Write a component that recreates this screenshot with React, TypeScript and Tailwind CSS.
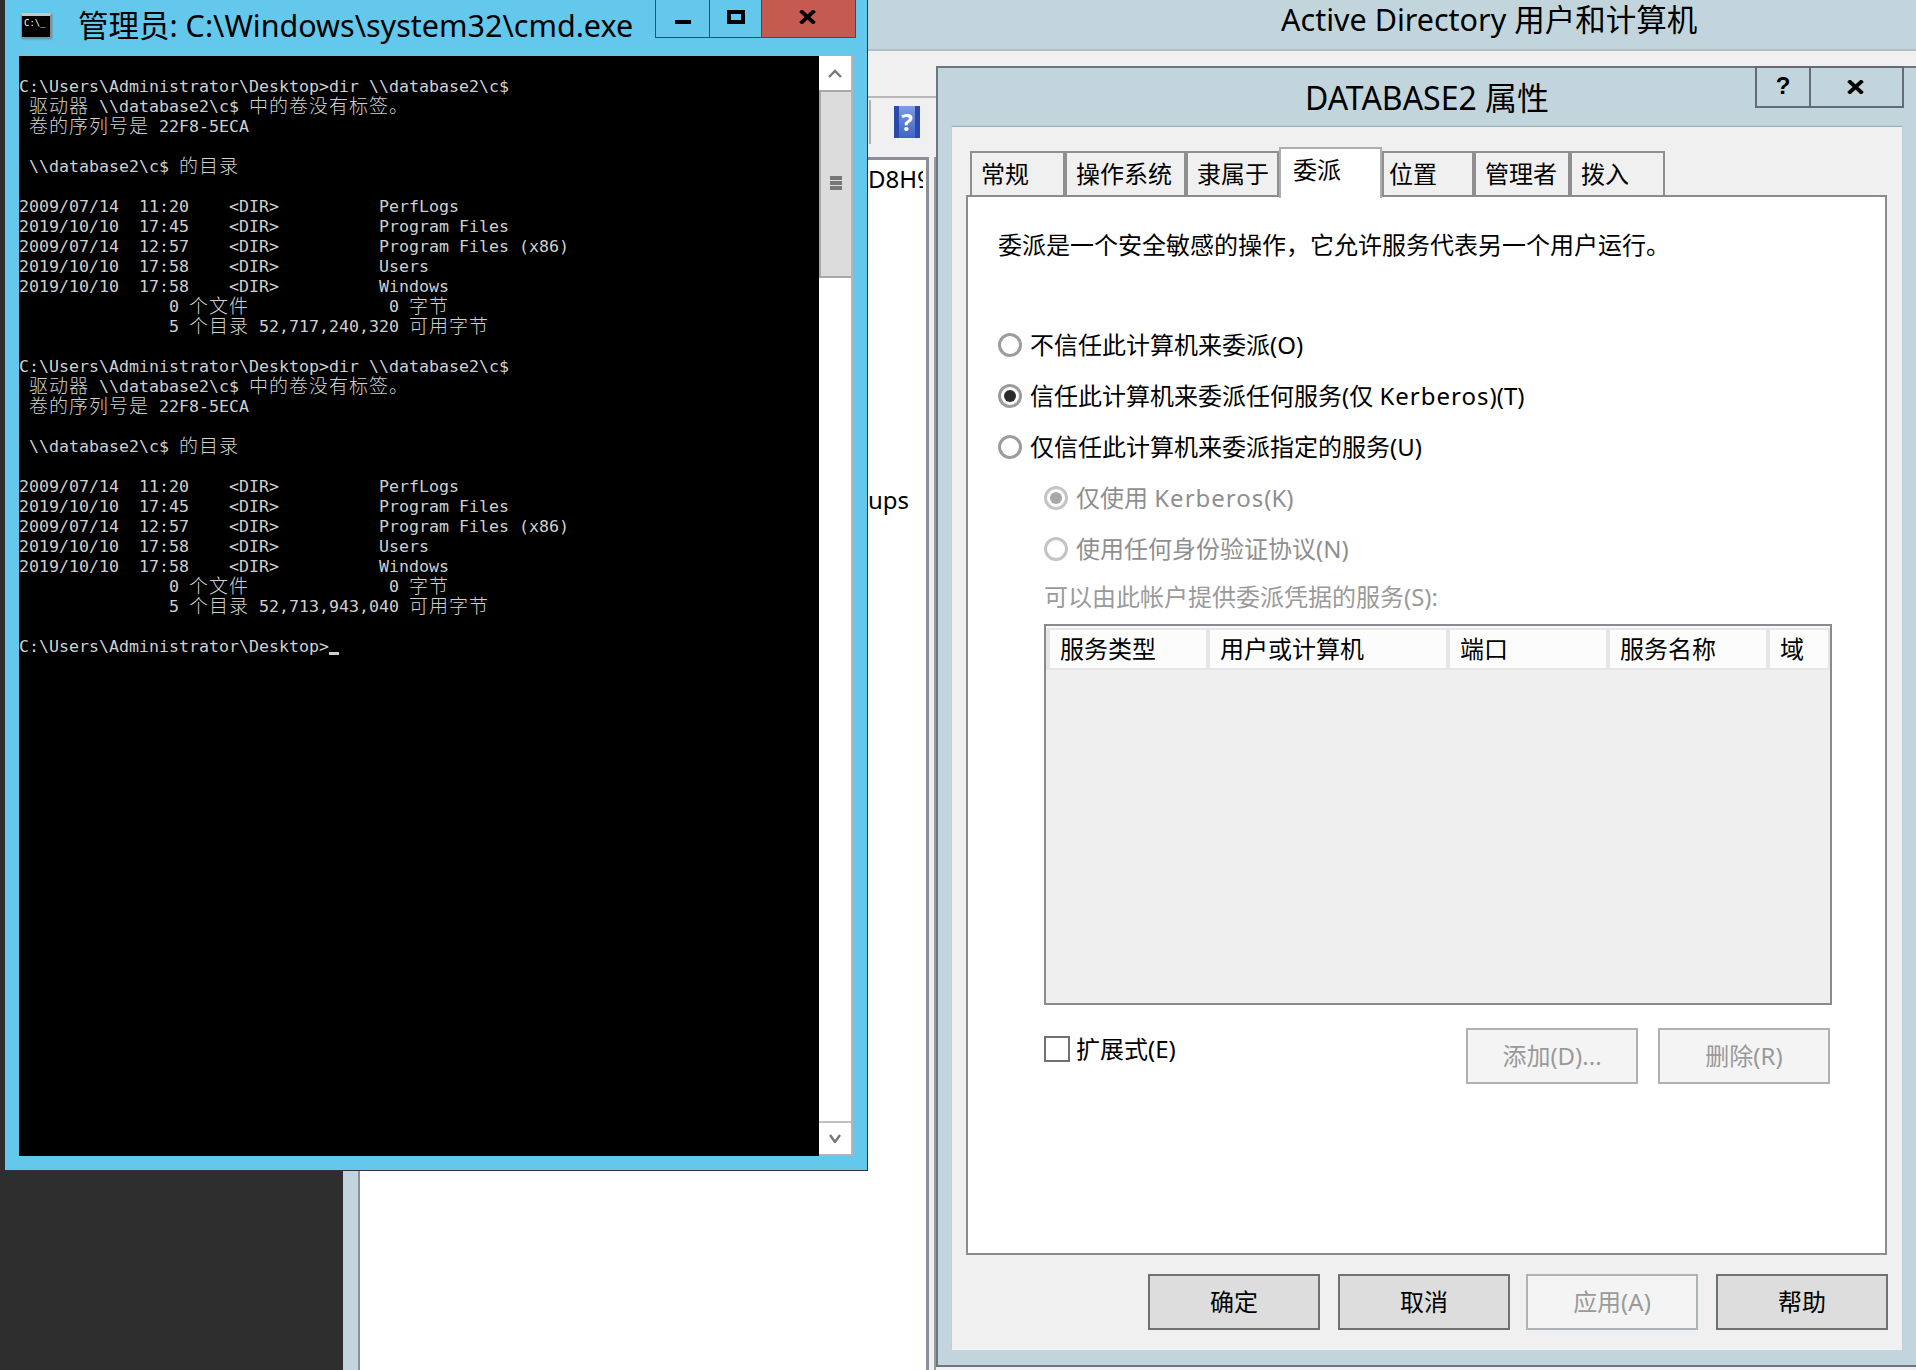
import type { ReactNode } from "react";

const dirs1 = [
  "2009/07/14  11:20    <DIR>          PerfLogs",
  "2019/10/10  17:45    <DIR>          Program Files",
  "2009/07/14  12:57    <DIR>          Program Files (x86)",
  "2019/10/10  17:58    <DIR>          Users",
  "2019/10/10  17:58    <DIR>          Windows",
];

const block = (free: string) => [
  "C:\\Users\\Administrator\\Desktop>dir \\\\database2\\c$",
  " 驱动器 \\\\database2\\c$ 中的卷没有标签。",
  " 卷的序列号是 22F8-5ECA",
  "",
  " \\\\database2\\c$ 的目录",
  "",
  ...dirs1,
  "               0 个文件              0 字节",
  `               5 个目录 ${free} 可用字节`,
  "",
];

const consoleLines = ["", ...block("52,717,240,320"), ...block("52,713,943,040")];

function ConsoleLine({ text }: { text: string }) {
  const parts = text.split(/([\u3000-\u9fff\uff00-\uffef]+)/);
  return (
    <div className="h-5 leading-5 whitespace-pre">
      {parts.map((p, i) =>
        i % 2 === 1 ? (
          <span key={i} className="font-['Noto_Sans_CJK_SC',sans-serif] text-[19px] leading-[0] tracking-[1px] font-light align-[-1px]">
            {p}
          </span>
        ) : (
          <span key={i}>{p}</span>
        )
      )}
    </div>
  );
}

function CmdWindow() {
  return (
    <div className="absolute left-[5px] top-0 w-[863px] h-[1171px] bg-[#64c8ec] border-r border-b border-[#2e3338] z-20">
      <div className="flex h-[56px] items-start">
        <div className="ml-[16px] mt-[13px] w-[30px] h-[25px] bg-black border border-[#8a8a8a] border-t-[3px] border-t-[#c8c8c8] shadow-[1px_1px_2px_#5a8aa0] overflow-hidden">
          <div className="font-['DejaVu_Sans_Mono',monospace] text-[9px] leading-[14px] pl-[2px] text-white whitespace-pre">C:\_</div>
        </div>
        <div className="ml-[27px] mt-[2px] w-[577px] font-['Noto_Sans','Noto_Sans_CJK_SC',sans-serif] text-[30.5px] leading-[46px] text-black whitespace-nowrap">
          管理员: C:\Windows\system32\cmd.exe
        </div>
        <div className="flex h-[38px] border-l border-b border-r border-[#3f4a52]">
          <div className="w-[54px] flex justify-center border-r border-[#3f4a52]">
            <div className="mt-[20px] w-4 h-1 bg-black" />
          </div>
          <div className="w-[52px] flex justify-center border-r border-[#3f4a52]">
            <div className="mt-[10px] w-[18px] h-[14px] border-[4px] border-black" />
          </div>
          <div className="w-[93px] flex justify-center bg-[#c45a50]">
            <svg width="17" height="14" viewBox="0 0 17 14" className="mt-[10px] -ml-[3px]">
              <path d="M1.5 0.5L15.5 13.5M15.5 0.5L1.5 13.5" stroke="#000" strokeWidth="3.8" />
            </svg>
          </div>
        </div>
      </div>
      <div className="flex ml-[14px] w-[834px] h-[1100px] shadow-[0_-1px_1px_#9fb4bd]">
        <div className="w-[800px] pt-[1px] bg-black text-[#d0d0d0] font-['DejaVu_Sans_Mono',monospace] text-[16.61px] relative overflow-hidden">
          {consoleLines.map((l, i) => (
            <ConsoleLine key={i} text={l} />
          ))}
          <div className="h-5 leading-5 whitespace-pre">
            C:\Users\Administrator\Desktop&gt;<span className="inline-block w-[10px] h-[3px] bg-[#d0d0d0] align-[-3px]" />
          </div>
        </div>
        <div className="w-[34px] flex flex-col bg-white border-r-2 border-b-2 border-[#b5b5b5]">
          <div className="h-[34px] flex justify-center items-center">
            <svg width="14" height="9" viewBox="0 0 14 9">
              <path d="M1 8L7 2L13 8" fill="none" stroke="#777" strokeWidth="2.4" />
            </svg>
          </div>
          <div className="h-[188px] bg-[#dcdcdc] border-l-2 border-t-2 border-b-2 border-[#a8a8a8] flex flex-col items-center justify-center gap-[1px] pb-[2px]">
            <div className="w-3 h-1 bg-[#777]" />
            <div className="w-3 h-1 bg-[#777]" />
            <div className="w-3 h-1 bg-[#777]" />
          </div>
          <div className="flex-1" />
          <div className="h-[33px] border-t-2 border-[#c0c0c0] flex justify-center items-center">
            <svg width="14" height="9" viewBox="0 0 14 9">
              <path d="M2 1L7 8L12 1" fill="none" stroke="#777" strokeWidth="2.4" />
            </svg>
          </div>
        </div>
      </div>
    </div>
  );
}

function AdWindow() {
  return (
    <div className="absolute left-[343px] top-0 right-0 bottom-0 flex flex-col bg-[#c3d5dc] font-['Noto_Sans','Noto_Sans_CJK_SC',sans-serif]">
      <div className="h-[51px] shrink-0 border-b-2 border-[#b3bdc2] pl-[938px] text-[30.5px] leading-[38px] text-black whitespace-nowrap">
        Active Directory 用户和计算机
      </div>
      <div className="flex-1 ml-[15px] flex flex-col border-l-2 border-[#8a8e96] bg-[#f0f0f0]">
        <div className="h-[47px] shrink-0 border-b-2 border-[#b8b8b8]" />
        <div className="h-[59px] shrink-0 flex pl-[509px]">
          <div className="mt-[2px] w-[2px] h-[44px] bg-[#b0b0b0]" />
          <div className="ml-[23px] mt-[8px] h-[32px] w-[26px] bg-[#2b4aa8] flex justify-center">
            <div className="w-[16px] bg-gradient-to-b from-[#7d9be0] to-[#3f63c4] text-white text-[24px] leading-[32px] font-bold text-center">?</div>
          </div>
        </div>
        <div className="flex-1 flex items-stretch">
          <div className="w-[569px] bg-white border-t-[3px] border-r-[3px] border-[#8a8e96] flex flex-col items-end text-[24px] leading-[32px] text-black">
            <div className="mt-[3px] mr-[3px] w-[55px] overflow-hidden whitespace-nowrap">D8H9W</div>
            <div className="mt-[289px] mr-[3px] w-[55px] whitespace-nowrap">ups</div>
          </div>
          <div className="ml-[5px] w-[2px] bg-[#9a9a9a]" />
        </div>
      </div>
    </div>
  );
}

function Radio({ checked, disabled }: { checked?: boolean; disabled?: boolean }) {
  return (
    <div className={`w-[24px] h-[24px] shrink-0 rounded-full border-[3px] flex items-center justify-center ${disabled ? "border-[#c4c4c4]" : "border-[#9c9c9c]"}`}>
      {checked && <div className={`w-[12px] h-[12px] rounded-full ${disabled ? "bg-[#a8a8a8]" : "bg-[#2b2b2b]"}`} />}
    </div>
  );
}

function RadioRow({ label, checked, disabled, sub }: { label: ReactNode; checked?: boolean; disabled?: boolean; sub?: boolean }) {
  return (
    <div className={`h-[34px] flex items-center gap-[8px] ${sub ? "ml-[46px]" : ""} ${disabled ? "text-[#8f8f8f]" : "text-black"}`}>
      <Radio checked={checked} disabled={disabled} />
      <span className="whitespace-nowrap -mt-[1px]">{label}</span>
    </div>
  );
}

function Btn({ label, disabled, className = "" }: { label: string; disabled?: boolean; className?: string }) {
  return (
    <div className={`w-[172px] h-[56px] border-2 flex items-center justify-center text-[24px] ${className} ${disabled ? "bg-[#f4f4f4] border-[#adb2b5] text-[#9a9a9a]" : "bg-[#dddddd] border-[#707070] text-black"}`}>
      {label}
    </div>
  );
}

const tabs = ["常规", "操作系统", "隶属于", "委派", "位置", "管理者", "拨入"];
const tabWidths = ["w-[95px]", "w-[121px]", "w-[93px]", "w-[103px]", "w-[92px]", "w-[96px]", "w-[95px]"];

const headers = [
  { label: "服务类型", w: "w-[156px]" },
  { label: "用户或计算机", w: "w-[236px]" },
  { label: "端口", w: "w-[156px]" },
  { label: "服务名称", w: "w-[156px]" },
  { label: "域", w: "w-[58px]" },
];

function Dialog() {
  return (
    <div className="absolute left-[936px] top-[66px] right-0 h-[1301px] bg-[#c3d5dc] border-l-2 border-t-2 border-b-2 border-[#6b7780] z-10 font-['Noto_Sans','Noto_Sans_CJK_SC',sans-serif] text-[24px] leading-[34px] text-black">
      <div className="absolute -top-[2px] right-[12px] h-[42px] flex border-2 border-[#656b75]">
        <div className="w-[54px] flex justify-center items-start border-r-2 border-[#656b75]">
          <span className="font-['Liberation_Sans',sans-serif] font-bold text-[24px] leading-[36px]">?</span>
        </div>
        <div className="w-[91px] flex justify-center items-start">
          <svg width="17" height="14" viewBox="0 0 17 14" className="mt-[12px] -ml-[2px]">
            <path d="M1.5 0.5L15.5 13.5M15.5 0.5L1.5 13.5" stroke="#000" strokeWidth="3.8" />
          </svg>
        </div>
      </div>
      <div className="h-[59px] flex items-center justify-center text-[32px]">DATABASE2 属性</div>
      <div className="mx-[14px] h-[1223px] bg-[#f0f0f0] shadow-[0_-1px_1px_#9fb0b8] pt-[20px] flex flex-col">
        <div className="ml-[18px] flex items-end h-[48px] relative z-10">
          {tabs.map((t, i) =>
            t === "委派" ? (
              <div key={t} className={`${tabWidths[i]} h-[51px] -mb-[3px] bg-white border-2 border-b-0 border-[#adadad] pl-[12px] leading-[41px]`}>
                {t}
              </div>
            ) : (
              <div key={t} className={`${tabWidths[i]} h-[44px] bg-[#f0f0f0] border-2 border-b-0 border-[#8f8f8f] leading-[42px] ${t === "位置" ? "pl-[5px]" : "pl-[9px]"}`}>
                {t}
              </div>
            )
          )}
        </div>
        <div className="ml-[14px] w-[921px] h-[1060px] shrink-0 bg-white border-2 border-[#8b8b90] pl-[30px]">
          <div className="mt-[31px] h-[34px] whitespace-nowrap">委派是一个安全敏感的操作，它允许服务代表另一个用户运行。</div>
          <div className="mt-[66px] flex flex-col gap-[17px]">
            <RadioRow label="不信任此计算机来委派(O)" />
            <RadioRow label={<>信任此计算机来委派任何服务(仅 <span className="tracking-[1px]">Kerberos</span>)(T)</>} checked />
            <RadioRow label="仅信任此计算机来委派指定的服务(U)" />
            <RadioRow label={<>仅使用 <span className="tracking-[1px]">Kerberos</span>(K)</>} checked disabled sub />
            <RadioRow label="使用任何身份验证协议(N)" disabled sub />
          </div>
          <div className="mt-[14px] ml-[46px] h-[34px] text-[#9a9a9a] whitespace-nowrap">可以由此帐户提供委派凭据的服务(S):</div>
          <div className="mt-[10px] ml-[46px] w-[788px] h-[381px] bg-[#efefef] border-2 border-[#8a8a90]">
            <div className="flex gap-[4px] pl-[4px] pt-[2px] pb-[2px] bg-[#e6e6e6] border-t-2 border-[#fafafa] h-[44px]">
              {headers.map((h) => (
                <div key={h.label} className={`${h.w} h-[38px] bg-[#fcfcfc] pl-[10px] leading-[38px] whitespace-nowrap`}>
                  {h.label}
                </div>
              ))}
            </div>
          </div>
          <div className="mt-[23px] ml-[46px] w-[786px] flex justify-between items-start">
            <div className="mt-[4px] flex items-center gap-[6px]">
              <div className="w-[26px] h-[26px] border-2 border-[#707070]" />
              <span className="whitespace-nowrap">扩展式(E)</span>
            </div>
            <div className="flex gap-[20px]">
              <Btn label="添加(D)..." disabled />
              <Btn label="删除(R)" disabled />
            </div>
          </div>
        </div>
        <div className="mt-[19px] mr-[14px] flex justify-end gap-[18px]">
          <Btn label="确定" />
          <Btn label="取消" />
          <Btn label="应用(A)" disabled className="-ml-[2px]" />
          <Btn label="帮助" />
        </div>
      </div>
    </div>
  );
}

export default function App() {
  return (
    <div className="relative w-[1916px] h-[1370px] overflow-hidden bg-[#2e2e2e]">
      <AdWindow />
      <Dialog />
      <CmdWindow />
    </div>
  );
}
